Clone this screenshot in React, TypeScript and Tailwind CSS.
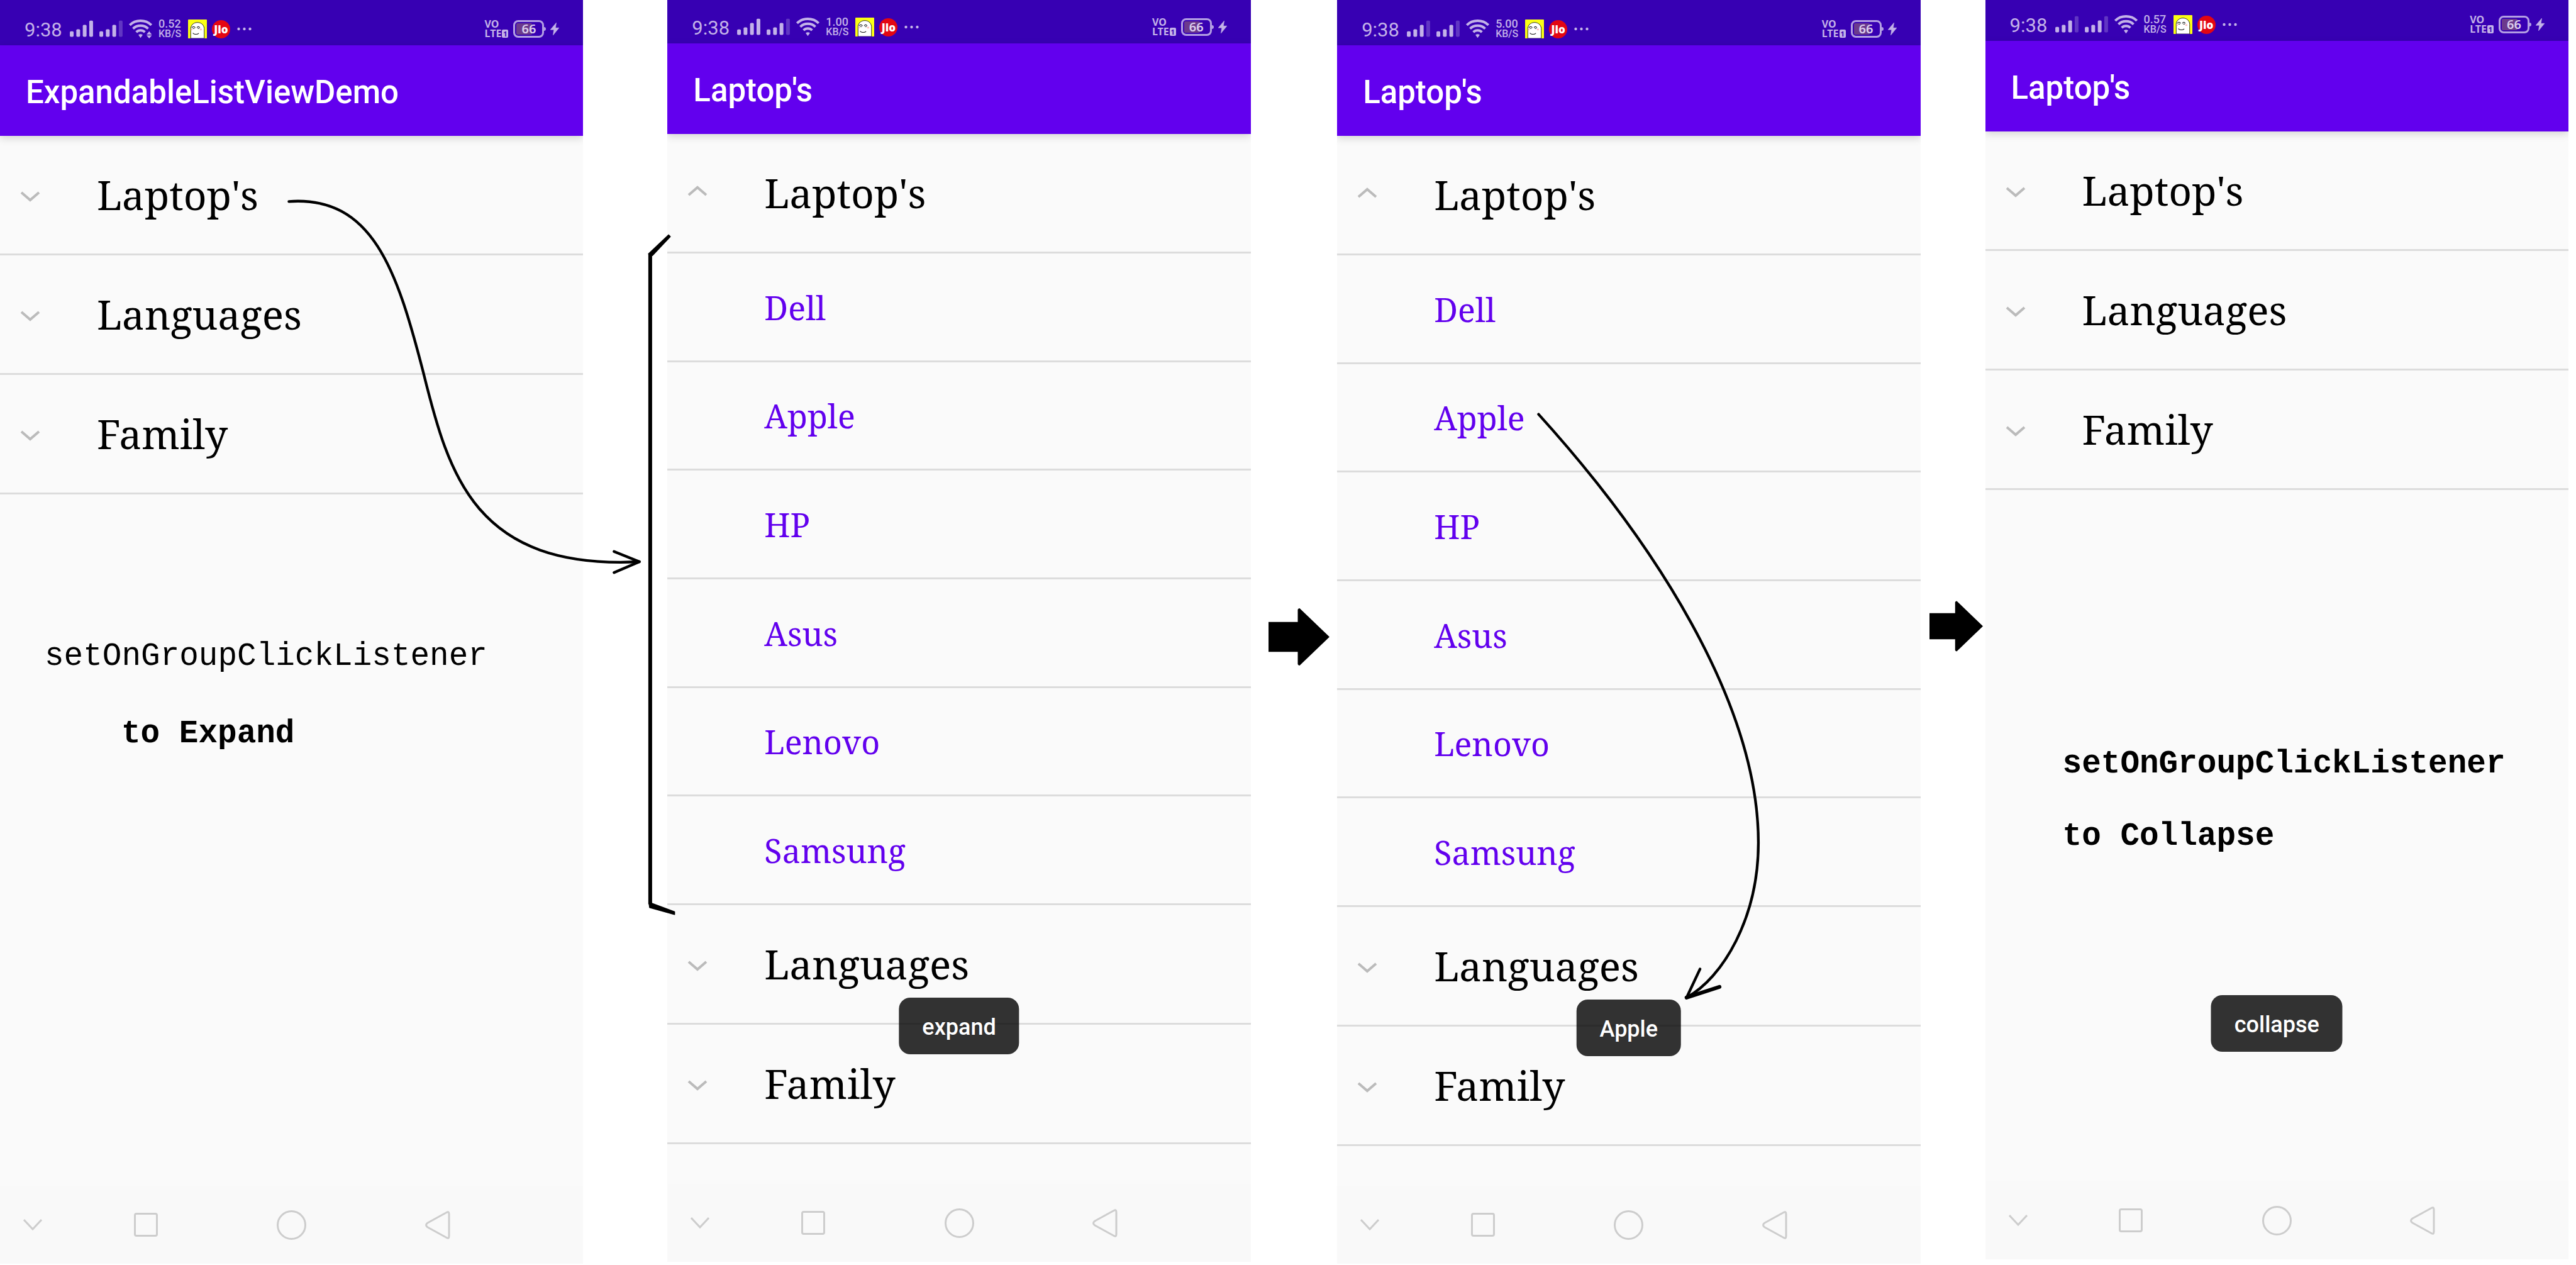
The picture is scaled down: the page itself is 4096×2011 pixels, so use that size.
import { useState } from "react";

const LAPTOPS = ["Dell", "Apple", "HP", "Asus", "Lenovo", "Samsung"];

const SERIF = "font-['Noto_Serif','DejaVu_Serif_Condensed','DejaVu_Serif',serif]";
const MONO = "font-['Liberation_Mono',monospace]";

function SignalBars({ dim }: { dim: boolean }) {
  return (
    <svg className="h-[30px] w-[37px]" viewBox="0 0 43 35" fill="currentColor" aria-hidden="true">
      <rect x="0" y="22" width="7" height="10" rx="2" />
      <rect x="12" y="18" width="7" height="14" rx="2" />
      <rect x="24" y="10" width="7" height="22" rx="2" />
      <rect x="36" y="2" width="7" height="30" rx="2" opacity={dim ? 0.3 : 1} />
    </svg>
  );
}

function Wifi({ active }: { active: boolean }) {
  return (
    <svg className="h-[30px] w-[37px]" viewBox="0 0 43 35" fill="none" stroke="currentColor" strokeWidth="4.6" aria-hidden="true">
      <path d="M1.5 10.5C12-.3 31-.3 41.500 10.500" />
      <path d="M7.500 17C15 9.500 28 9.500 35.500 17" />
      <path d="M13.500 23.500C18 19 25 19 29.500 23.500" />
      <path d="M17.500 28.500Q21.500 26 25.500 28.500L21.500 34Z" fill="currentColor" stroke="none" />
      {active && (
        <path d="M37.500 22L42.500 28H32.500ZM32.500 29.500H42.500L37.500 35Z" fill="currentColor" stroke="none" />
      )}
    </svg>
  );
}

function FaceIcon() {
  return (
    <svg className="h-[30px] w-[30px]" viewBox="0 0 35 35" aria-hidden="true">
      <rect width="35" height="35" rx="1" fill="#fbff14" />
      <path d="M5 35V20C4 11 10 5.500 17.500 5.500S31 11 30 20V35Z" fill="#fff" stroke="#111" strokeWidth="1" />
      <path d="M7 15.500Q10 11 13.500 15.500M16.500 15.500Q19 11 22 15.500" stroke="#111" strokeWidth="1.200" fill="none" />
      <path d="M9 16.500h3M18 16.500h3M9 25Q10 27.500 14 27.500T20 25.500" stroke="#111" strokeWidth="1.200" fill="none" />
      <rect x="5.500" y="17" width="2.500" height="3" fill="#ffb9b9" />
      <rect x="22" y="17" width="3.500" height="3" fill="#ffb9b9" />
    </svg>
  );
}

function StatusBar({ speed, firstDim, active, height }: { speed: string; firstDim: boolean; active: boolean; height: string }) {
  return (
    <div className={`flex shrink-0 items-end bg-[#3700b3] text-[#c3b2e8] ${height}`}>
      <div className="flex h-[52px] w-full items-center pr-[38px] pl-[39px]">
        <span className="mr-3 w-[60px] pt-[3px] text-[31px] leading-none">9:38</span>
        <SignalBars dim={firstDim} />
        <span className="w-[10px]" />
        <SignalBars dim />
        <span className="w-[10px]" />
        <Wifi active={active} />
        <span className="ml-[10px] flex w-[47px] flex-col font-medium">
          <span className="text-[18px] leading-4">{speed}</span>
          <span className="text-[16px] leading-4">KB/S</span>
        </span>
        <FaceIcon />
        <span className="ml-2 flex size-[29px] items-center justify-center rounded-full bg-[#e30613] font-['Open_Sans',sans-serif] text-[17px] leading-none font-extrabold text-white">
          Jio
        </span>
        <svg className="ml-[11px] h-[6px] w-[24px]" viewBox="0 0 24 6" fill="currentColor" aria-hidden="true">
          <circle cx="2.500" cy="3" r="2.200" />
          <circle cx="11.500" cy="3" r="2.200" />
          <circle cx="20.500" cy="3" r="2.200" />
        </svg>
        <span className="ml-auto flex flex-col font-['Noto_Sans',sans-serif] text-[16px] leading-[15px] font-bold">
          <span>VO</span>
          <span className="flex items-center">
            LTE
            <span className="ml-px flex h-[13px] w-[10px] items-center justify-center rounded-xs bg-[#c3b2e8] text-[11px] text-[#3700b3]">
              1
            </span>
          </span>
        </span>
        <span className="relative ml-2 flex h-[28px] w-[49px] items-center justify-center rounded-lg border-3 border-current font-['Noto_Sans',sans-serif] text-[20px] font-semibold text-[#b39fe3]">
          <span className="absolute top-[2px] left-[2px] h-[18px] w-[25px] rounded-xs bg-[#6c3a8c]" />
          <span className="relative leading-none text-[#dccfee]">66</span>
          <span className="absolute top-[8px] -right-[6px] h-[6px] w-[3px] rounded-r-sm bg-current" />
        </span>
        <svg className="ml-[10px] h-[20px] w-[14px]" viewBox="0 0 16 23" fill="currentColor" aria-hidden="true">
          <path d="M11 0L0 13H6.500L5 23L16 9.500H9.500Z" strokeLinejoin="round" stroke="currentColor" strokeWidth="0.600" />
        </svg>
      </div>
    </div>
  );
}

function Chevron({ open }: { open: boolean }) {
  return (
    <svg className="h-[28px] w-[32px]" viewBox="0 0 32 28" fill="none" stroke="#bbbbbb" strokeWidth="4" aria-hidden="true">
      <path d={open ? "M2 17L16 5L30 17" : "M2 10L16 22L30 10"} />
    </svg>
  );
}

function Group({ name, items = [], initiallyOpen = false }: { name: string; items?: string[]; initiallyOpen?: boolean }) {
  const [open, setOpen] = useState(initiallyOpen);
  return (
    <li className={SERIF}>
      <button
        type="button"
        aria-expanded={open}
        onClick={() => setOpen(!open)}
        className="flex h-[190px] w-full items-center border-b-3 border-[#dcdcdc] pl-8 text-left text-[64px] text-black"
      >
        <Chevron open={open} />
        <span className="ml-[90px]">{name}</span>
      </button>
      {open && items.length > 0 && (
        <ul className="grid h-[1036px] auto-rows-fr text-[52px] text-[#6200ee]">
          {items.map((item) => (
            <li key={item} className="flex items-center border-b-3 border-[#dcdcdc] pt-[2px] pl-[154px]">
              {item}
            </li>
          ))}
        </ul>
      )}
    </li>
  );
}

function NavBar() {
  return (
    <nav className="grid h-[124px] shrink-0 grid-cols-[1fr_2fr_2fr_2fr_1fr] items-center bg-[#f9f9f9] text-[#cdcdcd]">
      <button type="button" aria-label="Hide navigation" className="ml-[37px] w-[30px]">
        <svg className="h-[20px] w-[30px]" viewBox="0 0 30 20" fill="none" stroke="currentColor" strokeWidth="3">
          <path d="M1 2L15 17L29 2" />
        </svg>
      </button>
      <button type="button" aria-label="Recent apps" className="mx-auto size-[38px] rounded-sm border-3 border-current" />
      <button type="button" aria-label="Home" className="mx-auto size-[47px] rounded-full border-3 border-current" />
      <button type="button" aria-label="Back" className="mx-auto">
        <svg className="h-[45px] w-[40px]" viewBox="0 0 40 45" fill="none" stroke="currentColor" strokeWidth="3" strokeLinejoin="round">
          <path d="M34 2.500Q38 0 38 5V40Q38 45 34 42.500L4 26Q-1 22.500 4 19Z" />
        </svg>
      </button>
    </nav>
  );
}

type PhoneProps = {
  title: string;
  speed: string;
  firstDim?: boolean;
  active?: boolean;
  expanded?: boolean;
  toast?: string;
  statusHeight: string;
  inset: string;
  children?: React.ReactNode;
};

function Phone({ title, speed, firstDim = false, active = false, expanded = false, toast, statusHeight, inset, children }: PhoneProps) {
  return (
    <section className={`relative flex flex-col overflow-hidden bg-[#fafafa] font-['Roboto',sans-serif] ${inset}`}>
      <StatusBar speed={speed} firstDim={firstDim} active={active} height={statusHeight} />
      <header className="flex h-[144px] shrink-0 items-center bg-[#6200ee] pt-[6px] pl-[41px] shadow-[0_4px_12px_rgba(0,0,0,0.15)]">
        <h1 className="text-[51px] font-medium text-white">{title}</h1>
      </header>
      <main className="flex-1">
        <ul>
          <Group name="Laptop's" items={LAPTOPS} initiallyOpen={expanded} />
          <Group name="Languages" />
          <Group name="Family" />
        </ul>
        {children}
      </main>
      <NavBar />
      {toast && (
        <div role="status" className="absolute bottom-[330px] left-1/2 flex h-[90px] -translate-x-1/2 items-center rounded-[18px] bg-black/80 px-[37px] pt-[3px] text-[36px] font-medium text-white">
          {toast}
        </div>
      )}
    </section>
  );
}

function BlockArrow({ className }: { className: string }) {
  return (
    <div>
      <svg className={className} viewBox="0 0 98 92" aria-hidden="true">
        <path d="M0 22H47V2Q48 0 50 0L98 46L50 92Q48 92 47 90V70H0Z" />
      </svg>
    </div>
  );
}

function Annotations() {
  return (
    <svg
      className="pointer-events-none absolute inset-0 h-full w-full"
      viewBox="0 0 4770 2342"
      preserveAspectRatio="none"
      fill="none"
      stroke="#000"
      strokeWidth="5"
      strokeLinecap="round"
      strokeLinejoin="round"
      aria-hidden="true"
    >
      <path d="M535 373C690 362 735 500 784 690C831 880 880 1055 1184 1040" />
      <path d="M1137 1021L1184 1040L1137 1060" />
      <path d="M1204 470V1674" strokeWidth="7" strokeLinecap="butt" />
      <path d="M1201 470L1238 435L1241 438L1208 473Z" fill="#000" strokeWidth="2" />
      <path d="M1202 1672L1206 1672L1249 1688L1249 1693L1203 1680Z" fill="#000" strokeWidth="2" />
      <path d="M2849 767C3060 1000 3256 1300 3256 1560C3256 1700 3190 1810 3123 1847" />
      <path d="M3148 1794L3123 1847" />
      <path d="M3123 1847L3184 1827" strokeWidth="7" />
    </svg>
  );
}

export default function App() {
  return (
    <div className="relative grid min-h-screen grid-cols-[1080fr_156fr_1080fr_160fr_1080fr_120fr_1080fr_14fr] bg-white">
      <Phone title="ExpandableListViewDemo" speed="0.52" active statusHeight="h-[72px]" inset="mb-[2px]">
        <div className={`mt-[230px] pl-[71px] text-[51px] leading-[56px] text-black ${MONO}`}>
          <p>setOnGroupClickListener</p>
          <p className="mt-[67px] pl-[122px] font-bold">to Expand</p>
        </div>
      </Phone>
      <div />
      <Phone title="Laptop's" speed="1.00" expanded toast="expand" statusHeight="h-[69px]" inset="mb-[5px]" />
      <BlockArrow className="mt-[967px] ml-[28px] h-[91px] w-[97px]" />
      <Phone title="Laptop's" speed="5.00" firstDim expanded toast="Apple" statusHeight="h-[72px]" inset="mb-[2px]" />
      <BlockArrow className="mt-[954px] ml-[14px] h-[83px] w-[85px]" />
      <Phone title="Laptop's" speed="0.57" firstDim toast="collapse" statusHeight="h-[65px]" inset="mb-[9px]">
        <div className={`mt-[408px] pl-[123px] text-[51px] leading-[56px] font-bold text-black ${MONO}`}>
          <p>setOnGroupClickListener</p>
          <p className="mt-[59px]">to Collapse</p>
        </div>
      </Phone>
      <div />
      <Annotations />
    </div>
  );
}
